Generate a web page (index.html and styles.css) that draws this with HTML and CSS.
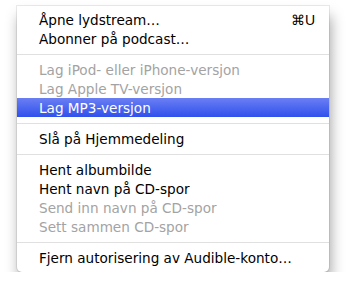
FILE: index.html
```html
<!DOCTYPE html>
<html lang="no">
<head>
  <meta charset="UTF-8">
  <title>Avansert-meny</title>
  <link rel="stylesheet" href="styles.css">
</head>
<body>
  <div class="meny">
    <div class="punkt"><span>Åpne lydstream…</span><span class="snarvei">⌘U</span></div>
    <div class="punkt"><span>Abonner på podcast…</span></div>
    <div class="skille"></div>
    <div class="punkt av"><span>Lag iPod- eller iPhone-versjon</span></div>
    <div class="punkt av"><span>Lag Apple TV-versjon</span></div>
    <div class="punkt valgt"><span>Lag MP3-versjon</span></div>
    <div class="skille"></div>
    <div class="punkt"><span>Slå på Hjemmedeling</span></div>
    <div class="skille"></div>
    <div class="punkt"><span>Hent albumbilde</span></div>
    <div class="punkt"><span>Hent navn på CD-spor</span></div>
    <div class="punkt av"><span>Send inn navn på CD-spor</span></div>
    <div class="punkt av"><span>Sett sammen CD-spor</span></div>
    <div class="skille"></div>
    <div class="punkt"><span>Fjern autorisering av Audible-konto…</span></div>
  </div>
</body>
</html>
```

FILE: styles.css
```css
body {
  margin: 0;
  background-color: #fff;
  font-family: "DejaVu Sans", sans-serif;
  font-size: 13.6px;
}
.meny {
  margin: 6px 0 0 17px;
  width: 312px;
  padding: 4px 0 5px 0;
  background-color: #fff;
  border-radius: 0 0 5px 5px;
  box-shadow: 0 0 0 1px rgba(0, 0, 0, 0.08), 2px 10px 14px rgba(0, 0, 0, 0.35);
}
.punkt {
  height: 19px;
  display: flex;
  align-items: center;
  justify-content: space-between;
  padding: 1px 14px 0 22px;
  box-sizing: border-box;
  color: #000;
}
.punkt.av {
  color: #a3a3a3;
}
.punkt.valgt {
  color: #fff;
  background: linear-gradient(#6b7ff3, #2f50ec);
}
.snarvei {
  font-family: "Liberation Sans", sans-serif;
  font-size: 14px;
}
.skille {
  height: 1px;
  margin: 6px 0 5px 0;
  background-color: #e0e0e0;
}
```
